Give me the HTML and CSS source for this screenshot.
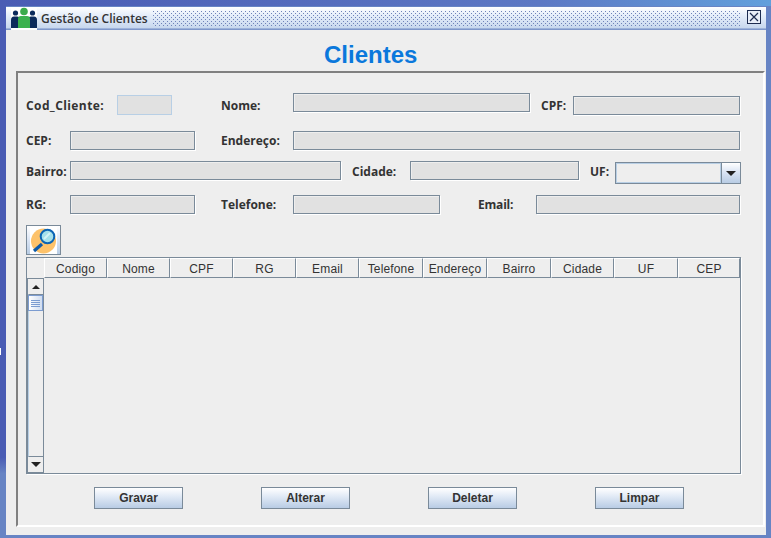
FILE: index.html
```html
<!DOCTYPE html>
<html lang="pt">
<head>
    <meta charset="UTF-8">
    <meta name="viewport" content="width=device-width, initial-scale=1.0">
    <title>Gestão de Clientes</title>
    <link rel="stylesheet" href="styles.css">
</head>
<body>
    <div class="window">
        <div class="edge-mark"></div>
        <div class="titlebar">
            <svg class="app-icon" width="26" height="23" viewBox="0 0 26 23">
                <rect width="26" height="23" fill="#fff"/>
                <circle cx="4.500" cy="6" r="2.600" fill="#0b2a5c"/>
                <circle cx="21.500" cy="6" r="2.600" fill="#0b2a5c"/>
                <path d="M0 21V13Q0 9.500 3 9.500H6Q9 9.500 9 13V21Z" fill="#0b2a5c"/>
                <path d="M17 21V13Q17 9.500 20 9.500H23Q26 9.500 26 13V21Z" fill="#0b2a5c"/>
                <circle cx="13" cy="4.500" r="3.800" fill="#3bab4b"/>
                <path d="M7 21V12Q7 9 10 9H16Q19 9 19 12V21Z" fill="#3bb14e"/>
            </svg>
            <span class="title-text">Gestão de Clientes</span>
            <div class="dots"></div>
            <div class="close-btn">
                <svg width="14" height="14" viewBox="0 0 14 14">
                    <rect x="0.500" y="0.500" width="13" height="13" fill="#e8eef8" stroke="#1d2c50"/>
                    <path d="M3 3L11 11M11 3L3 11" stroke="#1d2c50" stroke-width="1.200"/>
                </svg>
            </div>
        </div>

        <div class="content">
            <h1 class="heading">Clientes</h1>

            <div class="panel">
                <div class="row row-1">
                    <label class="lbl lbl-cod">Cod_Cliente:</label>
                    <div class="field field-cod"></div>
                    <label class="lbl lbl-nome">Nome:</label>
                    <div class="field field-nome"></div>
                    <label class="lbl lbl-cpf">CPF:</label>
                    <div class="field field-cpf"></div>
                </div>
                <div class="row row-2">
                    <label class="lbl lbl-first">CEP:</label>
                    <div class="field field-cep"></div>
                    <label class="lbl lbl-nome">Endereço:</label>
                    <div class="field field-end"></div>
                </div>
                <div class="row row-3">
                    <label class="lbl lbl-first">Bairro:</label>
                    <div class="field field-bairro"></div>
                    <label class="lbl lbl-cidade">Cidade:</label>
                    <div class="field field-cidade"></div>
                    <label class="lbl lbl-uf">UF:</label>
                    <div class="combo">
                        <div class="combo-value"></div>
                        <div class="combo-arrow"><span class="tri-down"></span></div>
                    </div>
                </div>
                <div class="row row-4">
                    <label class="lbl lbl-first">RG:</label>
                    <div class="field field-cep"></div>
                    <label class="lbl lbl-nome">Telefone:</label>
                    <div class="field field-tel"></div>
                    <label class="lbl lbl-email">Email:</label>
                    <div class="field field-email"></div>
                </div>

                <button class="search-btn">
                    <svg width="27" height="27" viewBox="0 0 27 27">
                        <rect width="27" height="27" fill="#fff"/>
                        <circle cx="13.500" cy="14" r="12.500" fill="#fdc26a"/>
                        <path d="M12 17L4 24" stroke="#0d5aa8" stroke-width="3.200"/>
                        <circle cx="17.500" cy="9.500" r="6.800" fill="#a5e0ea" stroke="#0b64b4" stroke-width="2"/>
                        <path d="M14 12L20 6" stroke="#d4f2f6" stroke-width="2"/>
                    </svg>
                </button>

                <div class="grid">
                    <div class="grid-head">
                        <div class="col">Codigo</div>
                        <div class="col">Nome</div>
                        <div class="col">CPF</div>
                        <div class="col">RG</div>
                        <div class="col">Email</div>
                        <div class="col col-w">Telefone</div>
                        <div class="col col-w">Endereço</div>
                        <div class="col col-w">Bairro</div>
                        <div class="col">Cidade</div>
                        <div class="col col-w">UF</div>
                        <div class="col col-last">CEP</div>
                    </div>
                    <div class="scrollbar">
                        <div class="sb-btn"><span class="tri-up"></span></div>
                        <div class="sb-track">
                            <div class="sb-thumb"><span></span><span></span><span></span><span></span></div>
                        </div>
                        <div class="sb-btn"><span class="tri-down"></span></div>
                    </div>
                </div>

                <div class="actions">
                    <button class="btn">Gravar</button>
                    <button class="btn">Alterar</button>
                    <button class="btn">Deletar</button>
                    <button class="btn">Limpar</button>
                </div>
            </div>
        </div>
    </div>
</body>
</html>
```

FILE: styles.css
```css
* {
    box-sizing: border-box;
}

html, body {
    margin: 0;
    padding: 0;
    background-color: #6784c4;
}

body {
    font-family: "Liberation Sans", Arial, sans-serif;
    font-size: 12px;
    color: #222;
}

.window {
    width: 771px;
    height: 538px;
    padding: 7px 5px 3px 6px;
    background:
        linear-gradient(90deg, #4a5cb4 0, #5c78c4 70%, #62a0dc 100%) 0 0 / 100% 6px no-repeat,
        linear-gradient(180deg, #4a5cb4 0, #4a5cb4 85%, #6784c4 88%) 0 0 / 6px 100% no-repeat,
        #6784c4;
    position: relative;
    overflow: hidden;
    display: flex;
    flex-direction: column;
}

.edge-mark {
    position: absolute;
    left: 0;
    top: 348px;
    width: 1px;
    height: 7px;
    background-color: #fff;
}

.titlebar {
    height: 23px;
    flex: none;
    display: flex;
    align-items: center;
    padding-left: 5px;
    background: linear-gradient(180deg, #fff 0, #e6eefa 35%, #c8d8ee 90%, #7e97cb 96%);
}

.app-icon {
    flex: none;
    display: block;
}

.title-text {
    margin-left: 4px;
    width: 112px;
    flex: none;
    color: #333;
    font-family: "Open Sans", Arial, sans-serif;
    font-size: 12px;
    font-weight: 600;
    letter-spacing: -0.05px;
}

.dots {
    width: 587px;
    height: 15px;
    flex: none;
    margin-top: -1px;
    background-image:
        radial-gradient(circle at 0.5px 0.5px, #6f82b8 0.8px, transparent 0.9px),
        radial-gradient(circle at 0.5px 0.5px, #6f82b8 0.8px, transparent 0.9px);
    background-size: 4px 4px, 4px 4px;
    background-position: 0 0, 2px 2px;
}

.close-btn {
    margin-left: 7px;
    height: 14px;
    margin-top: -3px;
}

.close-btn svg {
    display: block;
}

.content {
    flex: 1;
    min-height: 0;
    padding: 0 1px 8px 10px;
    background-color: #eeeeee;
    display: flex;
    flex-direction: column;
}

.heading {
    margin: 10px 0 0 308px;
    height: 31px;
    font-size: 24px;
    line-height: 30px;
    font-weight: bold;
    color: #0a78dc;
    flex: none;
}

.panel {
    flex: 1;
    padding: 20px 0 0 8px;
    border-top: 2px solid #808080;
    border-left: 2px solid #808080;
    border-right: 2px solid #fff;
    border-bottom: 2px solid #fff;
    display: flex;
    flex-direction: column;
}

.row {
    display: flex;
    align-items: flex-start;
    flex: none;
}

.row-1 { height: 22px; }
.row-2 { height: 22px; margin-top: 16px; }
.row-3 { height: 23px; margin-top: 8px; }
.row-4 { height: 20px; margin-top: 11px; }

.lbl {
    flex: none;
    font-family: "Open Sans", Arial, sans-serif;
    font-weight: 700;
    font-size: 12px;
    line-height: 20px;
    color: #333;
}

.row-1 .lbl { line-height: 26px; }
.row-3 .lbl { line-height: 21px; }

.lbl-first { width: 44px; }
.lbl-cod { width: 91px; letter-spacing: 0.4px; }
.lbl-nome { width: 72px; margin-left: 26px; }
.row-1 .lbl-nome { margin-left: 49px; }
.lbl-cpf { width: 32px; margin-left: 11px; }
.lbl-cidade { width: 58px; margin-left: 11px; }
.lbl-uf { width: 25px; margin-left: 11px; }
.lbl-email { width: 58px; margin-left: 38px; letter-spacing: -0.2px; }

.field {
    flex: none;
    height: 19px;
    background-color: #e1e1e1;
    border: 1px solid #7a8a99;
    box-shadow: 1px 1px 0 #fff, inset 1px 1px 0 #eeeeee;
}

.field-cod {
    width: 55px;
    height: 20px;
    margin-top: 2px;
    border-color: #b8cfe5;
    box-shadow: none;
}

.field-nome { width: 237px; }
.field-cpf { width: 167px; margin-top: 3px; }
.field-cep { width: 125px; }
.field-end { width: 447px; }
.field-bairro { width: 271px; }
.field-cidade { width: 169px; }
.field-tel { width: 147px; }
.field-email { width: 204px; }

.combo {
    flex: none;
    width: 126px;
    height: 22px;
    margin-top: 1px;
    display: flex;
    border: 1px solid #7a8a99;
}

.combo-value {
    flex: 1;
    background-color: #eeeeee;
    border: 1px solid #b8cfe5;
}

.combo-arrow {
    width: 19px;
    flex: none;
    border-left: 1px solid #7a8a99;
    background: linear-gradient(180deg, #fff 0, #dbe5f4 45%, #b8cce4 100%);
    display: flex;
    align-items: center;
    justify-content: center;
}

.tri-down, .tri-up {
    display: block;
    width: 0;
    height: 0;
    border-left: 5px solid transparent;
    border-right: 5px solid transparent;
}

.tri-down {
    border-top: 5px solid #222;
}

.tri-up {
    border-left-width: 4px;
    border-right-width: 4px;
    border-bottom: 4px solid #222;
}

.search-btn {
    flex: none;
    width: 35px;
    height: 30px;
    margin-top: 10px;
    padding: 0;
    border: 1px solid #7a8a99;
    background: linear-gradient(180deg, #fff 0, #dbe5f4 50%, #b8cce4 100%);
    display: flex;
    align-items: center;
    justify-content: center;
}

.search-btn svg {
    display: block;
}

.grid {
    flex: none;
    width: 715px;
    height: 217px;
    margin-top: 2px;
    border: 1px solid #7a8a99;
    box-shadow: 1px 1px 0 #fff;
    display: flex;
    flex-direction: column;
}

.grid-head {
    flex: none;
    height: 20px;
    padding-left: 17px;
    display: flex;
}

.col {
    flex: none;
    width: 63px;
    text-align: center;
    font-size: 12px;
    letter-spacing: 0.15px;
    line-height: 20px;
    color: #333;
    border-right: 1px solid #7a8a99;
    border-bottom: 1px solid #7a8a99;
    border-top: 1px solid #fff;
    border-left: 1px solid #fff;
}

.col-w {
    width: 64px;
}

.col-last {
    width: 62px;
}

.scrollbar {
    flex: none;
    width: 17px;
    height: 195px;
    display: flex;
    flex-direction: column;
    border: 1px solid #7a8a99;
}

.sb-btn {
    flex: none;
    height: 15px;
    display: flex;
    align-items: center;
    justify-content: center;
    background-color: #eeeeee;
}

.sb-track {
    flex: 1;
    border-top: 1px solid #7a8a99;
    border-bottom: 1px solid #7a8a99;
    border-left: 1px solid #b8cfe5;
    background-color: #eeeeee;
}

.sb-thumb {
    height: 16px;
    margin-left: -1px;
    border: 1px solid #7c9cd0;
    background: linear-gradient(90deg, #fff, #cfdcf0);
    display: flex;
    flex-direction: column;
    justify-content: center;
    gap: 1px;
    padding: 0 2px;
}

.sb-thumb span {
    display: block;
    height: 1px;
    background-color: #7c9cd0;
}

.actions {
    flex: none;
    display: flex;
    gap: 78px;
    margin-top: 13px;
    padding-left: 68px;
}

.btn {
    width: 89px;
    height: 22px;
    padding: 0;
    border: 1px solid #7a8a99;
    background: linear-gradient(180deg, #fff 0, #dfe8f5 45%, #b8cce4 100%);
    font-family: "Liberation Sans", Arial, sans-serif;
    font-size: 12px;
    font-weight: 700;
    color: #333;
}
```
